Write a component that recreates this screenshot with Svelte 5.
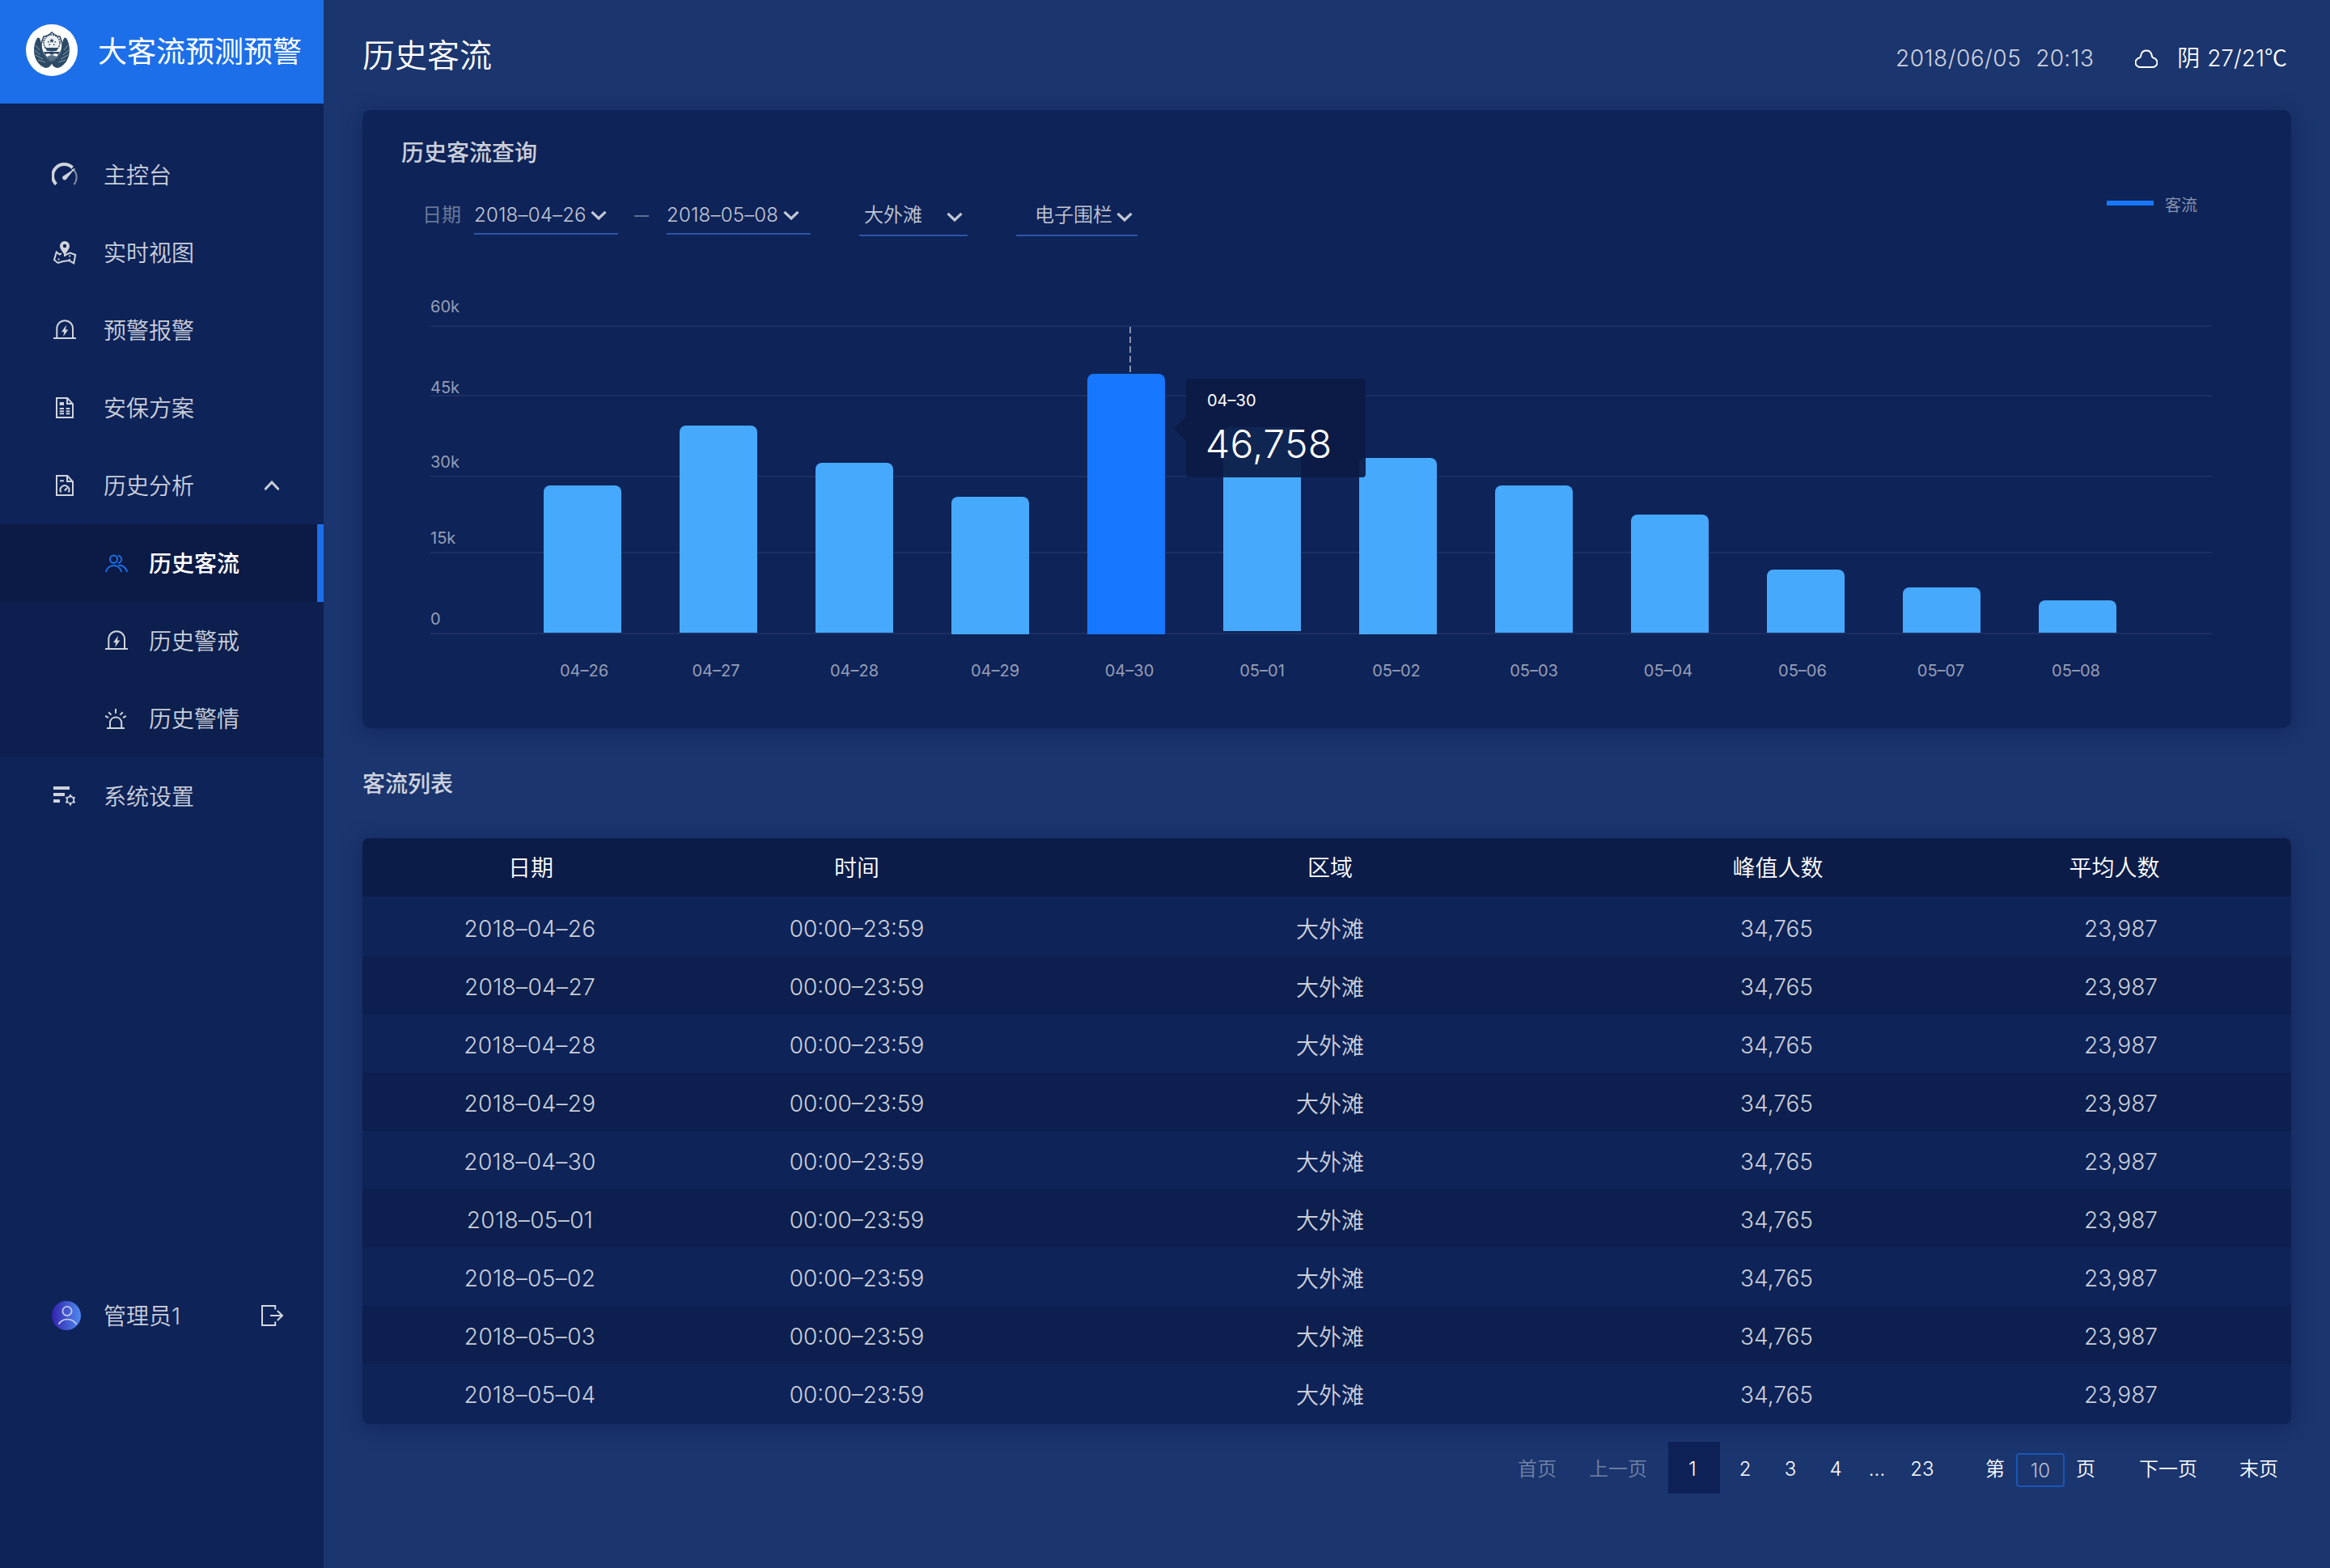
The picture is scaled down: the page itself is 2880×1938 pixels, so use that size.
<script>
  const ticks = [
    { label: '60k', h: 36, gap: 15 },
    { label: '45k', h: 86, gap: 1 },
    { label: '30k', h: 100, gap: 9 },
    { label: '15k', h: 94, gap: 9 },
    { label: '0', h: 100, gap: 9 }
  ];

  // h: bar height, lift: distance above the chart floor, nudge: label offset from the bar centre
  const bars = [
    { date: '04–26', h: 182, lift: 2, nudge: 2 },
    { date: '04–27', h: 256, lift: 2, nudge: -3 },
    { date: '04–28', h: 210, lift: 2, nudge: 0 },
    { date: '04–29', h: 170, lift: 0, nudge: 6 },
    { date: '04–30', h: 322, lift: 0, nudge: 4, active: true },
    { date: '05–01', h: 252, lift: 4, nudge: 0 },
    { date: '05–02', h: 218, lift: 0, nudge: -2 },
    { date: '05–03', h: 182, lift: 2, nudge: 0 },
    { date: '05–04', h: 146, lift: 2, nudge: -2 },
    { date: '05–06', h: 78, lift: 2, nudge: -4 },
    { date: '05–07', h: 56, lift: 2, nudge: -1 },
    { date: '05–08', h: 40, lift: 2, nudge: -2 }
  ];

  const rows = ['04–26', '04–27', '04–28', '04–29', '04–30', '05–01', '05–02', '05–03', '05–04'].map((d) => ({
    date: '2018–' + d,
    time: '00:00–23:59',
    area: '大外滩',
    peak: '34,765',
    avg: '23,987'
  }));

  const menu = [
    { icon: 'gauge', label: '主控台' },
    { icon: 'map', label: '实时视图' },
    { icon: 'alarm', label: '预警报警' },
    { icon: 'doc', label: '安保方案' },
    { icon: 'report', label: '历史分析', open: true }
  ];
  const submenu = [
    { icon: 'users', label: '历史客流', active: true },
    { icon: 'alarm', label: '历史警戒' },
    { icon: 'siren', label: '历史警情' }
  ];
</script>

{#snippet icon(name)}
  <svg class="icon" viewBox="0 0 32 32" fill="none" stroke="currentColor" stroke-width="2">
    {#if name === 'gauge'}
      <path d="M5.4 27.8A13.6 13.6 0 0 1 25.6 7.2" stroke-width="4" />
      <path d="M27.6 10.4A14 14 0 0 1 27.4 28" stroke-width="2" opacity=".6" />
      <path d="M28.6 8.2L18 21.4A2.7 2.7 0 0 1 13.9 17.8Z" fill="currentColor" stroke="none" />
      <path d="M29 8L24 9.4L27 11.8Z" fill="currentColor" stroke="none" />
    {:else if name === 'map'}
      <path fill-rule="evenodd" d="M16 2a6 6 0 0 1 6 6c0 4-4 7.500-6 12c-2-4.500-6-8-6-12a6 6 0 0 1 6-6zM16 5.800a2.200 2.200 0 1 0 0 4.400a2.200 2.200 0 0 0 0-4.400z" fill="currentColor" stroke="none" />
      <path d="M12 17.400L9.600 18.500L5.800 15.400L3 25.200L7.600 29L14 27L21.400 26L27.200 29.400L29.200 19L22.600 16.600L16 19.500" />
      <path d="M7.600 24.400h2M21.200 20.400h2M20.800 25h2M15 20h2" />
    {:else if name === 'alarm'}
      <path d="M2 26H30M6.300 26V14A9.800 9.800 0 0 1 26 14V26" />
      <path d="M18 9.500L12 18.300h3.200L14.200 24L20.300 15.600h-3.300z" fill="currentColor" stroke="none" />
    {:else if name === 'doc' || name === 'report'}
      <path d="M6 4H19.300L26 11.400V28H6ZM19 4V11H26" />
      {#if name === 'doc'}
        <path d="M9.700 9h5.300v4h-5.300zM9.700 16h5.300v2h-5.300zM9.700 19.200h5.300v2h-5.300zM9.700 22.300h5.300v2h-5.300zM17.700 16h4.600v2h-4.600zM17.700 19.200h4.600v2h-4.600zM17.700 22.300h4.600v2h-4.600z" fill="currentColor" stroke="none" />
      {:else}
        <path d="M10 10.300h5" />
        <path d="M11.400 24.500A5.400 5.400 0 1 1 20.600 24.500" />
        <path d="M15.800 22.500L19 19" />
      {/if}
    {:else if name === 'users'}
      <circle cx="12.500" cy="11.200" r="4.600" />
      <path d="M2.800 27C5.500 16.300 19.500 16.300 22.300 27M17.800 7A4.300 4.300 0 1 1 18 15.600M18.300 18.400C23.500 18.400 27.600 21.500 29.300 27" />
    {:else if name === 'siren'}
      <path d="M4 28H26M8 28V20.500A7.200 7.200 0 0 1 22.200 20.500V28M15 4V9.800M6.200 8.200L9.600 11.600M23.800 8.200L20.400 11.600M2.200 12.800L6 15.200M27.800 12.800L24 15.200" />
    {:else if name === 'settings'}
      <path d="M2 6H22M2 14H16M2 22H10" stroke-width="4" />
      <circle cx="23" cy="20.700" r="4.200" stroke-width="1.800" />
      <path d="M23 14v2.300M23 25v2.500M17.300 17.400l2 1.200M28.700 17.400l-2 1.200M17.300 24l2-1.200M28.700 24l-2-1.200" stroke-width="2.200" />
    {/if}
  </svg>
{/snippet}

{#snippet chevron()}
  <svg class="chevron" viewBox="0 0 20 12" fill="none" stroke="currentColor" stroke-width="3.200">
    <path d="M1.500 1.800L10 10L18.500 1.800" />
  </svg>
{/snippet}

<div class="app">
  <aside>
    <div class="brand">
      <svg class="logo" viewBox="0 0 64 64">
        <circle cx="32" cy="32" r="32" fill="#fff" />
        <path d="M14 17C8 27 8 44 20 52C25 55.500 29 54 32 49C35 54 39 55.500 44 52C56 44 56 27 50 17C47 15 46 19 45 24C46 36 40 42 32 46C24 42 18 36 19 24C18 19 17 15 14 17Z" fill="#2c4a66" />
        <path d="M12 26l5 6M11 32l7 6M12 38l9 5M15 44l9 3M52 26l-5 6M53 32l-7 6M52 38l-9 5M49 44l-9 3" stroke="#8b9bac" stroke-width="1" />
        <path d="M22 15Q27 15 32 10Q37 15 42 15L45 24Q46 38 32 45Q18 38 19 24Z" fill="#fff" stroke="#2c4a66" stroke-width="1.600" />
        <circle cx="32" cy="23" r="10" fill="#eef1f4" stroke="#2c4a66" stroke-width="1.600" stroke-dasharray="2 1" />
        <path d="M32 17.500l.9 1.800 2 .2-1.500 1.300.4 2-1.800-1-1.800 1 .4-2-1.500-1.300 2-.2zM27 21h1.600v1.600H27zM35.500 21h1.600v1.600h-1.600zM28.500 24.500h1.600v1.600h-1.600zM34 24.500h1.600v1.600H34z" fill="#2c4a66" />
        <path d="M24 29h16l-2 4H26zM22 34h20l-2 3.500Q36 35 32 38Q28 35 24 37.500Z" fill="#2c4a66" />
        <path d="M25 41Q32 35 39 41L32 45Z" fill="#5a7186" />
      </svg>
      <span>大客流预测预警</span>
    </div>

    <nav>
      {#each menu as item}
        <div class="item">
          {@render icon(item.icon)}
          <span>{item.label}</span>
          {#if item.open}
            <svg class="caret" viewBox="0 0 18 12" fill="none" stroke="currentColor" stroke-width="3"><path d="M1.200 10.200L9 2L16.800 10.200" stroke-linecap="round" /></svg>
          {/if}
        </div>
      {/each}
      <div class="sub">
        {#each submenu as item}
          <div class="item" class:active={item.active}>
            {@render icon(item.icon)}
            <span>{item.label}</span>
          </div>
        {/each}
      </div>
      <div class="item">
        {@render icon('settings')}
        <span>系统设置</span>
      </div>
    </nav>

    <div class="user">
      <svg class="avatar" viewBox="0 0 36 36" fill="none">
        <defs>
          <linearGradient id="face" x1="0" y1="0" x2="1" y2="0">
            <stop offset="0" stop-color="#3221ab" />
            <stop offset="1" stop-color="#4f8bf0" />
          </linearGradient>
        </defs>
        <circle cx="18" cy="18" r="18" fill="url(#face)" />
        <circle cx="19" cy="12.500" r="5.600" stroke="#c3c8ec" stroke-width="1.800" />
        <path d="M8.500 28.800C13 20.500 25.500 20.500 30.500 28.800" stroke="#c3c8ec" stroke-width="1.800" />
      </svg>
      <span>管理员1</span>
      <svg class="logout" viewBox="0 0 28 26" fill="none" stroke="currentColor" stroke-width="2">
        <path d="M17.200 5.500V1H1V25H17.200V20.500M11 13H26M19.800 7L26 13L19.800 19" />
      </svg>
    </div>
  </aside>

  <main>
    <header>
      <h1>历史客流</h1>
      <div class="status">
        <span class="day">2018/06/05</span>
        <span class="clock">20:13</span>
        <svg class="cloud" viewBox="0 0 28 24" fill="none" stroke="#fff" stroke-width="2">
          <path d="M7 23A5.600 5.600 0 0 1 5.600 11.600C7.200 10.800 7 9 7.600 7.200A6.700 6.700 0 0 1 20.400 7.200C21 9 20.800 10.800 22.400 11.600A5.600 5.600 0 0 1 21 23Z" />
        </svg>
        <span class="sky">阴</span>
        <span class="temp">27/21<span class="deg">℃</span></span>
      </div>
    </header>

    <section class="card">
      <h2>历史客流查询</h2>
      <div class="tools">
        <span class="hint">日期</span>
        <div class="select date">2018–04–26{@render chevron()}</div>
        <i class="dash"></i>
        <div class="select date">2018–05–08{@render chevron()}</div>
        <div class="select area">大外滩{@render chevron()}</div>
        <div class="select fence">电子围栏{@render chevron()}</div>
        <div class="legend"><i></i>客流</div>
      </div>

      <div class="plot">
        <div class="grid">
          {#each ticks as t}
            <div class="tick" style:height="{t.h}px" style:padding-bottom="{t.gap}px">{t.label}</div>
          {/each}
        </div>
        <div class="bars">
          {#each bars as b}
            <div class="bar" class:active={b.active} style:height="{b.h}px" style:margin-bottom="{b.lift}px">
              {#if b.active}
                <svg class="guide" viewBox="0 0 2 58"><path d="M1 0V58" stroke="#8791ab" stroke-width="2" stroke-dasharray="8 4" /></svg>
                <div class="tip">
                  <span>04–30</span>
                  <strong>46,758</strong>
                </div>
              {/if}
            </div>
          {/each}
        </div>
      </div>
      <div class="axis">
        {#each bars as b}
          <span style:translate="{b.nudge}px">{b.date}</span>
        {/each}
      </div>
    </section>

    <h2 class="list-title">客流列表</h2>

    <section class="table">
      <div class="tr head">
        <span>日期</span><span>时间</span><span>区域</span><span class="peak">峰值人数</span><span class="avg">平均人数</span>
      </div>
      {#each rows as r}
        <div class="tr">
          <span class="when">{r.date}</span><span class="time">{r.time}</span><span class="zone">{r.area}</span><span>{r.peak}</span><span class="avg">{r.avg}</span>
        </div>
      {/each}
    </section>

    <div class="pager">
      <span class="first off">首页</span>
      <span class="prev off">上一页</span>
      <span class="page current">1</span>
      <span class="page">2</span>
      <span class="page">3</span>
      <span class="page">4</span>
      <span class="page more">...</span>
      <span class="page end">23</span>
      <span class="go">第</span>
      <span class="input">10</span>
      <span class="unit">页</span>
      <span class="next">下一页</span>
      <span class="last">末页</span>
    </div>
  </main>
</div>

<style>
  :global(body) {
    margin: 0;
    background: #1b356e;
  }
  .app {
    display: flex;
    width: 2880px;
    height: 1938px;
    overflow: hidden;
    background: #1b356e;
    color: #fff;
    font-family: Inter, 'Noto Sans CJK SC', sans-serif;
    font-weight: 350;
    font-size: 28px;
    line-height: 40px;
    white-space: nowrap;
  }
  h1,
  h2 {
    margin: 0;
  }
  svg {
    display: block;
    flex: none;
  }

  /* Sidebar */
  aside {
    display: flex;
    flex-direction: column;
    flex: none;
    width: 400px;
    background: #0e2358;
    color: rgba(255, 255, 255, 0.8);
  }
  .brand {
    display: flex;
    align-items: center;
    box-sizing: border-box;
    height: 128px;
    padding: 0 0 4px 32px;
    background: #1c6fe8;
    color: #fff;
    font-size: 36px;
    font-weight: 400;
  }
  .brand span {
    padding-top: 3px;
  }
  .logo {
    width: 64px;
    height: 64px;
    margin-right: 25px;
  }
  nav {
    padding-top: 40px;
  }
  .item {
    display: flex;
    align-items: center;
    box-sizing: border-box;
    height: 96px;
    padding-left: 64px;
  }
  .item span,
  .user span {
    padding-top: 2px;
  }
  .icon {
    width: 32px;
    height: 32px;
    margin-right: 32px;
    color: #cfd4da;
  }
  .caret {
    width: 18px;
    height: 12px;
    margin: 0 55px 0 auto;
    color: #c9cdd8;
  }
  .sub {
    background: #0c1f4e;
  }
  .sub .item {
    padding-left: 128px;
  }
  .sub .icon {
    margin-right: 24px;
  }
  .sub .active {
    border-right: 8px solid #1c6fe8;
    background: #0b1b45;
    color: #fff;
    font-weight: 500;
  }
  .sub .active .icon {
    color: #1c6fe8;
  }
  .user {
    display: flex;
    align-items: center;
    height: 36px;
    margin-top: 576px;
    padding-left: 64px;
  }
  .avatar {
    width: 36px;
    height: 36px;
    margin-right: 28px;
  }
  .logout {
    width: 28px;
    height: 26px;
    margin: 0 49px 0 auto;
    color: #d4d7dc;
  }

  /* Header */
  main {
    flex: 1;
    padding: 0 48px;
  }
  header {
    display: flex;
    align-items: center;
    justify-content: space-between;
    height: 136px;
  }
  h1 {
    padding-top: 2px;
    font-size: 40px;
    font-weight: 350;
    line-height: 56px;
  }
  .status {
    display: flex;
    align-items: center;
    padding: 8px 5px 0 0;
  }
  .day,
  .clock {
    color: rgba(255, 255, 255, 0.8);
    letter-spacing: 0.3px;
  }
  .day {
    letter-spacing: 0.5px;
    margin-right: 18px;
  }
  .cloud {
    width: 28px;
    height: 24px;
    margin: 0 24px 0 51px;
  }
  .temp {
    margin-left: 9px;
  }
  .deg {
    font-family: 'Noto Sans CJK SC', sans-serif;
    line-height: 1;
  }

  /* Chart card */
  .card {
    box-sizing: border-box;
    height: 764px;
    padding: 32px 98px 0 84px;
    border-radius: 10px;
    background: #0e2358;
    box-shadow: 0 4px 24px rgba(9, 26, 76, 0.5);
  }
  h2 {
    color: rgba(255, 255, 255, 0.8);
    font-size: 28px;
    font-weight: 500;
    line-height: 42px;
  }
  .card h2 {
    margin-left: -36px;
  }
  .tools {
    display: flex;
    align-items: flex-start;
    height: 80px;
    padding-top: 34px;
    margin-left: -10px;
    font-size: 24px;
    line-height: 42px;
  }
  .hint {
    width: 64px;
    padding-top: 1px;
    color: rgba(255, 255, 255, 0.4);
    font-weight: 400;
  }
  .select {
    display: flex;
    align-items: center;
    box-sizing: border-box;
    border-bottom: 2px solid #2d55a5;
    color: rgba(255, 255, 255, 0.75);
  }
  .chevron {
    width: 20px;
    height: 12px;
  }
  .date {
    width: 178px;
    height: 46px;
    justify-content: space-between;
    padding-right: 14px;
    letter-spacing: 0.2px;
  }
  .date .chevron {
    margin-bottom: 1px;
  }
  .dash {
    width: 18px;
    height: 2px;
    margin: 22px 22px 0 20px;
    background: #5d6c93;
  }
  .area,
  .fence {
    height: 48px;
    padding: 0 6px 2px;
    justify-content: space-between;
  }
  .area {
    width: 134px;
    margin-left: 60px;
  }
  .fence {
    width: 150px;
    margin-left: 60px;
    padding-left: 23px;
  }
  .area .chevron,
  .fence .chevron {
    margin-top: 4px;
  }
  .legend {
    display: flex;
    align-items: center;
    margin: -11px 18px 0 auto;
    color: rgba(255, 255, 255, 0.55);
    font-size: 20px;
  }
  .legend i {
    width: 58px;
    height: 6px;
    margin: -6px 14px 0 0;
    background: #1777ff;
  }
  .plot {
    display: grid;
    margin-top: 44px;
  }
  .grid,
  .bars {
    grid-area: 1 / 1;
  }
  .tick {
    display: flex;
    align-items: flex-end;
    box-sizing: border-box;
    border-bottom: 2px solid #1b2f62;
    color: rgba(255, 255, 255, 0.57);
    font-size: 20px;
    font-weight: 400;
    line-height: 16px;
  }
  .bars {
    display: flex;
    align-items: flex-end;
    gap: 72px;
    padding-left: 140px;
  }
  .bar {
    position: relative;
    width: 96px;
    border-radius: 8px 8px 0 0;
    background: #46a9fc;
  }
  .bar.active {
    z-index: 1;
    background: #1777ff;
  }
  .guide {
    position: absolute;
    left: 52px;
    bottom: 100%;
    width: 2px;
    height: 58px;
  }
  .tip {
    position: absolute;
    left: 122px;
    top: 6px;
    display: flex;
    flex-direction: column;
    box-sizing: border-box;
    width: 222px;
    height: 122px;
    padding: 15px 0 0 26px;
    border-radius: 4px;
    background: rgba(11, 27, 69, 0.93);
    font-size: 20px;
    font-weight: 400;
    line-height: 24px;
  }
  .tip::before {
    content: '';
    position: absolute;
    right: 100%;
    top: 47px;
    border: solid transparent;
    border-width: 15px 15px 15px 0;
    border-right-color: rgba(11, 27, 69, 0.93);
  }
  .tip strong {
    margin: 12px 0 0 -2px;
    font-size: 48px;
    font-weight: 300;
    letter-spacing: 0.3px;
    line-height: 60px;
  }
  .axis {
    display: flex;
    gap: 72px;
    margin-top: 33px;
    padding-left: 140px;
    color: rgba(255, 255, 255, 0.57);
    font-size: 20px;
    font-weight: 400;
    line-height: 24px;
  }
  .axis span {
    width: 96px;
    text-align: center;
  }

  /* Table */
  .list-title {
    margin: 48px 0 46px;
  }
  .table {
    overflow: hidden;
    border-radius: 8px;
    box-shadow: 0 4px 24px rgba(9, 26, 76, 0.5);
  }
  .tr {
    display: grid;
    grid-template-columns: 416px 390px 780px 324px 474px;
    align-items: center;
    height: 72px;
    padding-top: 4px;
    box-sizing: border-box;
    background: #0e2358;
    color: rgba(255, 255, 255, 0.8);
    text-align: center;
  }
  .tr:nth-child(odd) {
    background: #0c1f4e;
  }
  .tr:nth-child(2),
  .tr:last-child {
    height: 74px;
  }
  .tr:nth-child(2) {
    padding-top: 6px;
  }
  .tr:last-child {
    padding-top: 2px;
  }
  .tr.head {
    padding: 2px 0 0;
    background: #0b1c49;
    color: #fff;
  }
  .when {
    margin-left: -2px;
    letter-spacing: 0.35px;
  }
  .zone {
    padding-top: 2px;
  }
  .peak {
    padding-left: 3px;
  }
  .avg {
    padding-left: 53px;
  }
  .head .avg {
    padding-left: 37px;
  }

  /* Pagination */
  .pager {
    display: flex;
    align-items: center;
    height: 64px;
    margin-top: 22px;
    padding-left: 1428px;
    font-size: 24px;
  }
  .pager span {
    padding-top: 4px;
  }
  .pager .off {
    color: rgba(255, 255, 255, 0.4);
  }
  .first {
    width: 88px;
  }
  .prev {
    width: 98px;
  }
  .page {
    width: 56px;
    text-align: center;
  }
  .pager .current {
    width: 60px;
    padding: 3px 4px 0 0;
    margin-right: 3px;
    line-height: 61px;
    background: #0e2156;
  }
  .more {
    margin: 0 0 0 -5px;
  }
  .go {
    margin-left: 50px;
  }
  .pager .input {
    box-sizing: border-box;
    width: 60px;
    height: 42px;
    margin: 5px 14px 0;
    padding: 0;
    border: 2px solid #1c57b5;
    border-radius: 4px;
    color: rgba(255, 255, 255, 0.7);
    line-height: 40px;
    text-align: center;
  }
  .next {
    margin: 0 52px 0 54px;
  }
</style>
